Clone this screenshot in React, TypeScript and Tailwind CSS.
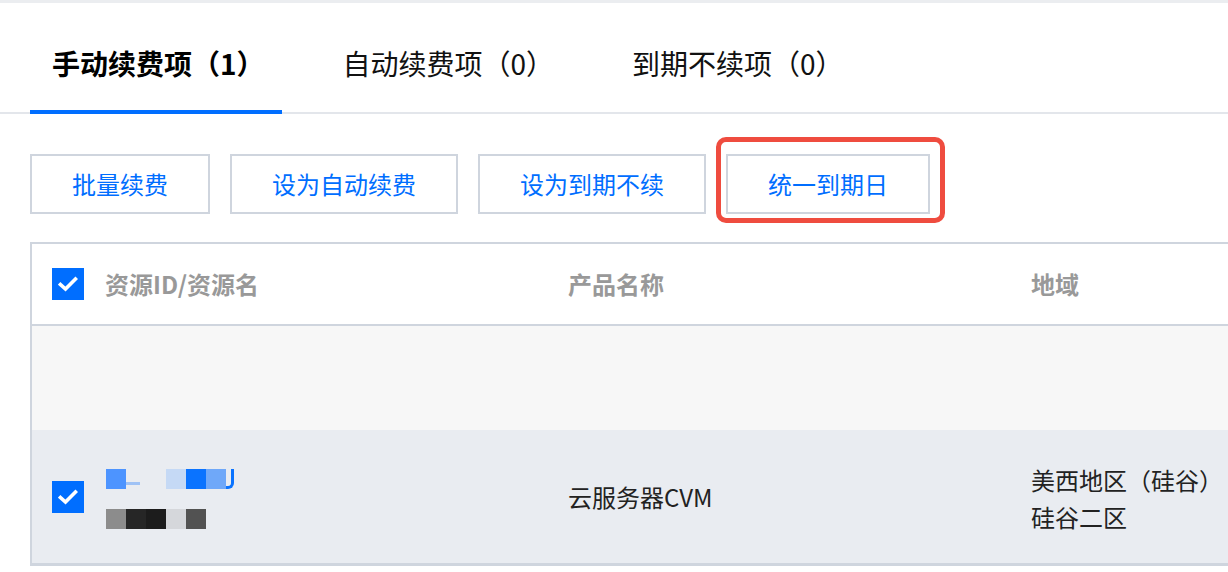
import React from "react";

const font = { fontFamily: '"Noto Sans CJK SC", "Noto Sans", sans-serif' };

function Check({ className = "" }: { className?: string }) {
  return (
    <div className={`w-[32px] h-[32px] bg-[#006eff] flex items-center justify-center shrink-0 ${className}`}>
      <svg width="20" height="16" viewBox="0 0 20 16" fill="none">
        <polyline points="2.5,8.5 7.5,13 17.5,3" stroke="white" strokeWidth="3.6" strokeLinecap="square" strokeLinejoin="miter" />
      </svg>
    </div>
  );
}

export default function App() {
  const tabs = [
    { label: "手动续费项（1）", active: true },
    { label: "自动续费项（0）", active: false },
    { label: "到期不续项（0）", active: false },
  ];
  const buttons = ["批量续费", "设为自动续费", "设为到期不续"];
  return (
    <div className="w-[1228px] h-[572px] bg-white overflow-hidden" style={font}>
      <div className="h-[3px] bg-[#ebedf0]" />
      <div className="flex gap-[39px] pl-[30px] border-b-2 border-[#e3e6eb]">
        {tabs.map((t) => (
          <div
            key={t.label}
            className={`pl-[22px] pr-[17px] pt-[40px] pb-[27px] text-[28px] leading-[40px] text-[#111] mb-[-2px] border-b-4 ${
              t.active ? "font-bold border-[#006eff] text-black" : "border-transparent"
            }`}
          >
            {t.label}
          </div>
        ))}
      </div>
      <div className="flex gap-[20px] pl-[30px] mt-[40px]">
        {buttons.map((b) => (
          <div
            key={b}
            className="h-[60px] px-[40px] border-2 border-[#cfd5de] flex items-center text-[24px] text-[#006eff] bg-white"
          >
            {b}
          </div>
        ))}
        <div className="relative">
          <div className="absolute left-[-10px] top-[-17px] right-[-15px] bottom-[-9px] border-[5px] border-[#ef4c3f] rounded-[10px]" />
          <div className="relative h-[60px] px-[40px] border-2 border-[#cfd5de] flex items-center text-[24px] text-[#006eff] bg-white">
            统一到期日
          </div>
        </div>
      </div>
      <div className="ml-[30px] mt-[28px] border-l-2 border-t-2 border-b-[3px] border-[#cfd5de]">
        <div className="grid grid-cols-[516px_463px_1fr] h-[80px] items-center text-[24px] font-semibold text-[#999]">
          <div className="flex items-center pl-[20px] gap-[21px]">
            <Check />
            <span>资源ID/资源名</span>
          </div>
          <div className="pl-[20px]">产品名称</div>
          <div className="pl-[20px]">地域</div>
        </div>
        <div className="h-[2px] bg-[#cfd5de]" />
        <div className="h-[104px] bg-[#f7f7f7]" />
        <div className="grid grid-cols-[516px_463px_1fr] h-[133px] items-center bg-[#e9ecf1] text-[24px] text-[#222]">
          <div className="flex items-center pl-[20px] gap-[22px]">
            <Check />
            <div className="flex flex-col gap-[20px] pt-[4px]">
              <div className="flex h-[20px] items-end">
                <div className="w-[20px] h-[20px] bg-[#4d94ff]" />
                <div className="w-[14px] h-[3px] bg-[#9fc2f5] mb-[4px]" />
                <div className="w-[26px]" />
                <div className="w-[20px] h-[20px] bg-[#c5d9f5]" />
                <div className="w-[20px] h-[20px] bg-[#0a73ff]" />
                <div className="w-[20px] h-[20px] bg-[#6fa8f9]" />
                <div className="w-[8px] h-[20px] border-r-[3px] border-b-[3px] border-[#0a73ff] rounded-br-[6px]" />
              </div>
              <div className="flex h-[20px]">
                <div className="w-[20px] h-[20px] bg-[#8c8c8c]" />
                <div className="w-[20px] h-[20px] bg-[#262626]" />
                <div className="w-[20px] h-[20px] bg-[#1c1c1c]" />
                <div className="w-[20px] h-[20px] bg-[#d5d7db]" />
                <div className="w-[20px] h-[20px] bg-[#525252]" />
              </div>
            </div>
          </div>
          <div className="pl-[20px]">云服务器CVM</div>
          <div className="pl-[20px] leading-[37px] pt-[2px]">
            <div>美西地区（硅谷）</div>
            <div>硅谷二区</div>
          </div>
        </div>
      </div>
    </div>
  );
}
